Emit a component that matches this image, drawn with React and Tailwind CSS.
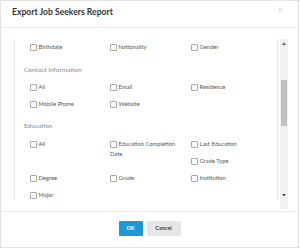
import React from 'react';

const font = { fontFamily: 'Lato, "Open Sans", sans-serif' };

const Check = ({ label }) => (
  <div className="pt-[3px] leading-[10px] text-[5.8px] text-[#555] max-w-[70px]">
    <span className="inline-block w-[7px] h-[7px] border border-[#a8a8a8] rounded-[1px] bg-white align-[-1.5px] mr-[1.5px]" />
    {label}
  </div>
);

const Heading = ({ children, className }) => (
  <div className={`h-[12px] leading-[12px] text-[6.5px] text-[#8a8a8a] ${className}`}>{children}</div>
);

export default function App() {
  return (
    <div style={font} className="w-[299px] h-[248px] bg-white border border-[#e2e2e2] flex flex-col">
      {/* Header */}
      <div className="h-[27px] border-b border-[#ececec] flex items-start justify-between pl-[11px] pr-[15px] pt-[6px]">
        <div className="text-[8.6px] font-bold text-[#333] leading-[10px]">Export Job Seekers Report</div>
        <svg width="5" height="5" viewBox="0 0 5 5" className="mt-[0px]">
          <path d="M0.5 0.5 L4.5 4.5 M4.5 0.5 L0.5 4.5" stroke="#c4c4c4" strokeWidth="0.8" />
        </svg>
      </div>

      {/* Body */}
      <div className="h-[183px] pt-[11px] pl-[13px] flex items-start">
        <div className="w-[264px] h-[161px] border-x border-[#e8e8e8] overflow-hidden pl-[9px]">
          <div className="grid grid-cols-[80px_81px_1fr] auto-rows-[17px] pl-[6px]">
            <Check label="Birthdate" />
            <Check label="Nationality" />
            <Check label="Gender" />
          </div>

          <Heading className="mt-[8px]">Contact Information</Heading>
          <div className="grid grid-cols-[80px_81px_1fr] auto-rows-[17px] pl-[6px] mt-[3px]">
            <Check label="All" />
            <Check label="Email" />
            <Check label="Residence" />
            <Check label="Mobile Phone" />
            <Check label="Website" />
          </div>

          <Heading className="mt-[7px]">Education</Heading>
          <div className="grid grid-cols-[80px_81px_1fr] auto-rows-[17px] pl-[6px] mt-[4px]">
            <Check label="All" />
            <div className="row-span-2">
              <Check label="Education Completion Date" />
            </div>
            <Check label="Last Education" />
            <div />
            <Check label="Grade Type" />
            <Check label="Degree" />
            <Check label="Grade" />
            <Check label="Institution" />
            <Check label="Major" />
          </div>
        </div>

        {/* Scrollbar */}
        <div className="ml-[2px] w-[8px] h-[170px] bg-[#f1f1f1] flex flex-col items-center">
          <svg width="4" height="3" viewBox="0 0 4 3" className="mt-[3px]">
            <path d="M0 3 L2 0.5 L4 3 Z" fill="#555" />
          </svg>
          <div className="w-[6px] h-[46px] bg-[#c1c1c1] mt-[35px]" />
          <div className="flex-1" />
          <svg width="4" height="3" viewBox="0 0 4 3" className="mb-[12px]">
            <path d="M0 0 L2 2.5 L4 0 Z" fill="#555" />
          </svg>
        </div>
      </div>

      {/* Footer */}
      <div className="flex-1 border-t border-[#ececec] flex justify-center items-start pt-[9px] gap-[4px]">
        <button className="w-[24px] h-[15px] bg-[#1b98d5] text-white text-[5.5px] font-bold rounded-[1px]">OK</button>
        <button className="w-[34px] h-[15px] bg-[#e6e6e6] text-[#444] text-[5.5px] font-bold rounded-[1px]">Cancel</button>
      </div>
    </div>
  );
}
